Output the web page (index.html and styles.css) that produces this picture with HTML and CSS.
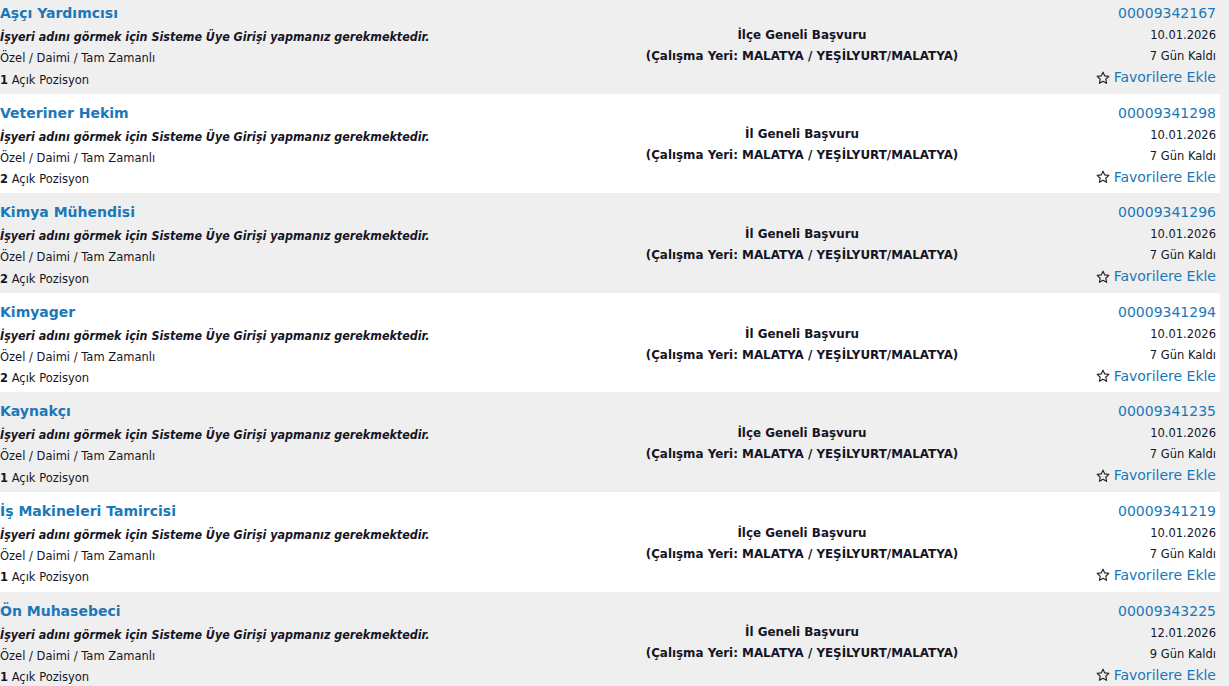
FILE: index.html
```html
<!DOCTYPE html>
<html lang="tr">
<head>
<meta charset="utf-8">
<title>İlanlar</title>
<link rel="stylesheet" href="styles.css">
</head>
<body>
<div class="list">

  <div class="row shade">
    <div class="col-left">
      <a class="title" href="#">Aşçı Yardımcısı</a>
      <div class="employer">İşyeri adını görmek için Sisteme Üye Girişi yapmanız gerekmektedir.</div>
      <div class="line">Özel / Daimi / Tam Zamanlı</div>
      <div class="line"><b>1</b> Açık Pozisyon</div>
    </div>
    <div class="col-mid">
      <div>İlçe Geneli Başvuru</div>
      <div>(Çalışma Yeri: MALATYA / YEŞİLYURT/MALATYA)</div>
    </div>
    <div class="col-right">
      <a class="code" href="#">00009342167</a>
      <div class="line">10.01.2026</div>
      <div class="line">7 Gün Kaldı</div>
      <a class="fav" href="#"><svg class="star" viewBox="0 0 16 16"><path d="M8 1.3l2 4.3 4.7.6-3.5 3.2.9 4.7L8 11.8l-4.1 2.3.9-4.7L1.3 6.2 6 5.6z"/></svg>Favorilere Ekle</a>
    </div>
  </div>

  <div class="row">
    <div class="col-left">
      <a class="title" href="#">Veteriner Hekim</a>
      <div class="employer">İşyeri adını görmek için Sisteme Üye Girişi yapmanız gerekmektedir.</div>
      <div class="line">Özel / Daimi / Tam Zamanlı</div>
      <div class="line"><b>2</b> Açık Pozisyon</div>
    </div>
    <div class="col-mid">
      <div>İl Geneli Başvuru</div>
      <div>(Çalışma Yeri: MALATYA / YEŞİLYURT/MALATYA)</div>
    </div>
    <div class="col-right">
      <a class="code" href="#">00009341298</a>
      <div class="line">10.01.2026</div>
      <div class="line">7 Gün Kaldı</div>
      <a class="fav" href="#"><svg class="star" viewBox="0 0 16 16"><path d="M8 1.3l2 4.3 4.7.6-3.5 3.2.9 4.7L8 11.8l-4.1 2.3.9-4.7L1.3 6.2 6 5.6z"/></svg>Favorilere Ekle</a>
    </div>
  </div>

  <div class="row shade">
    <div class="col-left">
      <a class="title" href="#">Kimya Mühendisi</a>
      <div class="employer">İşyeri adını görmek için Sisteme Üye Girişi yapmanız gerekmektedir.</div>
      <div class="line">Özel / Daimi / Tam Zamanlı</div>
      <div class="line"><b>2</b> Açık Pozisyon</div>
    </div>
    <div class="col-mid">
      <div>İl Geneli Başvuru</div>
      <div>(Çalışma Yeri: MALATYA / YEŞİLYURT/MALATYA)</div>
    </div>
    <div class="col-right">
      <a class="code" href="#">00009341296</a>
      <div class="line">10.01.2026</div>
      <div class="line">7 Gün Kaldı</div>
      <a class="fav" href="#"><svg class="star" viewBox="0 0 16 16"><path d="M8 1.3l2 4.3 4.7.6-3.5 3.2.9 4.7L8 11.8l-4.1 2.3.9-4.7L1.3 6.2 6 5.6z"/></svg>Favorilere Ekle</a>
    </div>
  </div>

  <div class="row">
    <div class="col-left">
      <a class="title" href="#">Kimyager</a>
      <div class="employer">İşyeri adını görmek için Sisteme Üye Girişi yapmanız gerekmektedir.</div>
      <div class="line">Özel / Daimi / Tam Zamanlı</div>
      <div class="line"><b>2</b> Açık Pozisyon</div>
    </div>
    <div class="col-mid">
      <div>İl Geneli Başvuru</div>
      <div>(Çalışma Yeri: MALATYA / YEŞİLYURT/MALATYA)</div>
    </div>
    <div class="col-right">
      <a class="code" href="#">00009341294</a>
      <div class="line">10.01.2026</div>
      <div class="line">7 Gün Kaldı</div>
      <a class="fav" href="#"><svg class="star" viewBox="0 0 16 16"><path d="M8 1.3l2 4.3 4.7.6-3.5 3.2.9 4.7L8 11.8l-4.1 2.3.9-4.7L1.3 6.2 6 5.6z"/></svg>Favorilere Ekle</a>
    </div>
  </div>

  <div class="row shade">
    <div class="col-left">
      <a class="title" href="#">Kaynakçı</a>
      <div class="employer">İşyeri adını görmek için Sisteme Üye Girişi yapmanız gerekmektedir.</div>
      <div class="line">Özel / Daimi / Tam Zamanlı</div>
      <div class="line"><b>1</b> Açık Pozisyon</div>
    </div>
    <div class="col-mid">
      <div>İlçe Geneli Başvuru</div>
      <div>(Çalışma Yeri: MALATYA / YEŞİLYURT/MALATYA)</div>
    </div>
    <div class="col-right">
      <a class="code" href="#">00009341235</a>
      <div class="line">10.01.2026</div>
      <div class="line">7 Gün Kaldı</div>
      <a class="fav" href="#"><svg class="star" viewBox="0 0 16 16"><path d="M8 1.3l2 4.3 4.7.6-3.5 3.2.9 4.7L8 11.8l-4.1 2.3.9-4.7L1.3 6.2 6 5.6z"/></svg>Favorilere Ekle</a>
    </div>
  </div>

  <div class="row">
    <div class="col-left">
      <a class="title" href="#">İş Makineleri Tamircisi</a>
      <div class="employer">İşyeri adını görmek için Sisteme Üye Girişi yapmanız gerekmektedir.</div>
      <div class="line">Özel / Daimi / Tam Zamanlı</div>
      <div class="line"><b>1</b> Açık Pozisyon</div>
    </div>
    <div class="col-mid">
      <div>İlçe Geneli Başvuru</div>
      <div>(Çalışma Yeri: MALATYA / YEŞİLYURT/MALATYA)</div>
    </div>
    <div class="col-right">
      <a class="code" href="#">00009341219</a>
      <div class="line">10.01.2026</div>
      <div class="line">7 Gün Kaldı</div>
      <a class="fav" href="#"><svg class="star" viewBox="0 0 16 16"><path d="M8 1.3l2 4.3 4.7.6-3.5 3.2.9 4.7L8 11.8l-4.1 2.3.9-4.7L1.3 6.2 6 5.6z"/></svg>Favorilere Ekle</a>
    </div>
  </div>

  <div class="row shade">
    <div class="col-left">
      <a class="title" href="#">Ön Muhasebeci</a>
      <div class="employer">İşyeri adını görmek için Sisteme Üye Girişi yapmanız gerekmektedir.</div>
      <div class="line">Özel / Daimi / Tam Zamanlı</div>
      <div class="line"><b>1</b> Açık Pozisyon</div>
    </div>
    <div class="col-mid">
      <div>İl Geneli Başvuru</div>
      <div>(Çalışma Yeri: MALATYA / YEŞİLYURT/MALATYA)</div>
    </div>
    <div class="col-right">
      <a class="code" href="#">00009343225</a>
      <div class="line">12.01.2026</div>
      <div class="line">9 Gün Kaldı</div>
      <a class="fav" href="#"><svg class="star" viewBox="0 0 16 16"><path d="M8 1.3l2 4.3 4.7.6-3.5 3.2.9 4.7L8 11.8l-4.1 2.3.9-4.7L1.3 6.2 6 5.6z"/></svg>Favorilere Ekle</a>
    </div>
  </div>

</div>
</body>
</html>
```

FILE: styles.css
```css
html, body {
  margin: 0;
  padding: 0;
}
body {
  background: #eef0f2;
  font-family: "DejaVu Sans", Verdana, sans-serif;
  font-size: 11.5px;
  color: #151525;
  overflow: hidden;
}
.list {
  width: 1220px;
  margin-top: -6px;
}
.row {
  display: grid;
  grid-template-columns: 602px 400px 1fr;
  height: 99.6px;
  box-sizing: border-box;
  padding-top: 6px;
  background: #ffffff;
}
.row.shade {
  background: #efefef;
}
.col-left {
  display: flex;
  flex-direction: column;
}
.title {
  font-size: 14px;
  font-weight: bold;
  line-height: 26px;
  color: #1b78b8;
  text-decoration: none;
}
.employer {
  font-family: "DejaVu Sans Condensed", "DejaVu Sans", sans-serif;
  font-size: 12.4px;
  font-weight: bold;
  font-style: italic;
  line-height: 22px;
}
.line {
  line-height: 21.5px;
}
.col-mid {
  align-self: center;
  text-align: center;
  font-size: 11.9px;
  font-weight: bold;
  line-height: 21px;
  margin-top: -2px;
}
.col-right {
  display: flex;
  flex-direction: column;
  align-items: flex-end;
  padding-top: 1px;
  padding-right: 4px;
}
.code {
  font-size: 14px;
  line-height: 24px;
  color: #1b78b8;
  text-decoration: none;
}
.col-right .line {
  line-height: 21px;
}
.fav {
  display: flex;
  align-items: center;
  gap: 4px;
  font-size: 14px;
  line-height: 21px;
  color: #1b78b8;
  text-decoration: none;
}
.star {
  width: 14px;
  height: 14px;
  fill: none;
  stroke: #222;
  stroke-width: 1.3;
  stroke-linejoin: round;
}
```
